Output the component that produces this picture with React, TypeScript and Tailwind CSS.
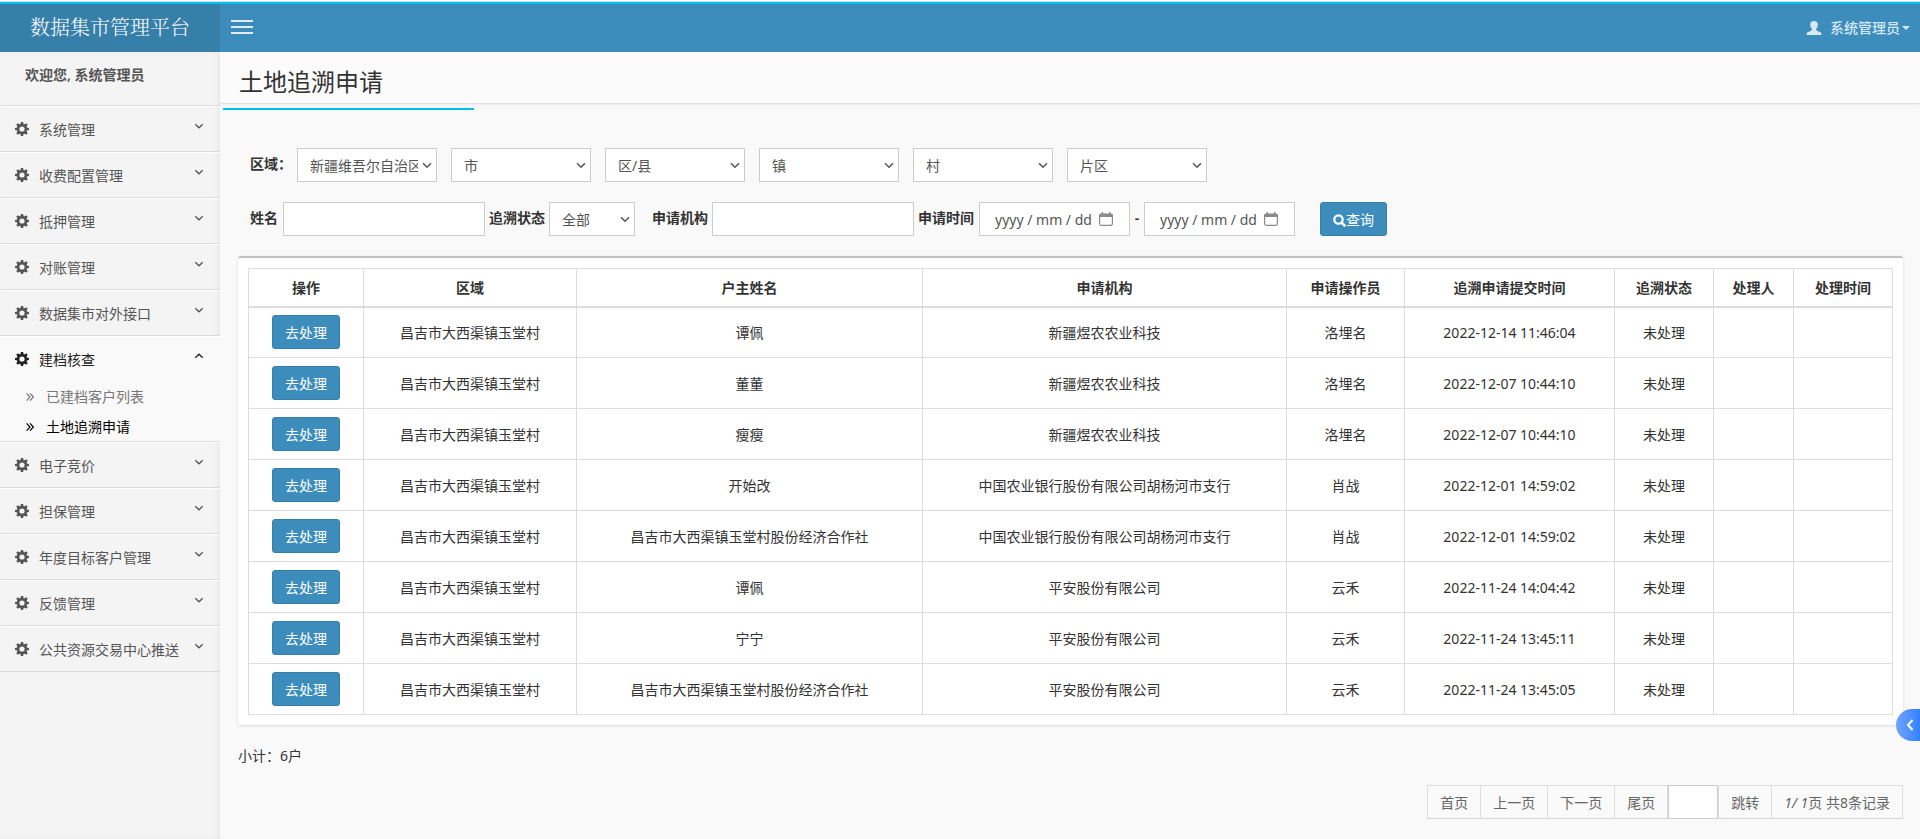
import type { ReactNode } from 'react';

const MENU_TOP = ['系统管理', '收费配置管理', '抵押管理', '对账管理', '数据集市对外接口'];
const MENU_BOTTOM = ['电子竞价', '担保管理', '年度目标客户管理', '反馈管理', '公共资源交易中心推送'];

const REGIONS = [
  { name: '省', value: '新疆维吾尔自治区' },
  { name: '市', value: '市' },
  { name: '区/县', value: '区/县' },
  { name: '镇', value: '镇' },
  { name: '村', value: '村' },
  { name: '片区', value: '片区' },
];

const COLUMNS = [
  { title: '操作', width: 'w-[115px]' },
  { title: '区域', width: 'w-[213px]' },
  { title: '户主姓名', width: 'w-[346px]' },
  { title: '申请机构', width: 'w-[364px]' },
  { title: '申请操作员', width: 'w-[118px]' },
  { title: '追溯申请提交时间', width: 'w-[210px]' },
  { title: '追溯状态', width: 'w-[99px]' },
  { title: '处理人', width: 'w-[80px]' },
  { title: '处理时间', width: 'w-[99px]' },
];

const AREA = '昌吉市大西渠镇玉堂村';

const ROWS = [
  [AREA, '谭佩', '新疆煜农农业科技', '洛埋名', '2022-12-14 11:46:04', '未处理'],
  [AREA, '董董', '新疆煜农农业科技', '洛埋名', '2022-12-07 10:44:10', '未处理'],
  [AREA, '瘦瘦', '新疆煜农农业科技', '洛埋名', '2022-12-07 10:44:10', '未处理'],
  [AREA, '开始改', '中国农业银行股份有限公司胡杨河市支行', '肖战', '2022-12-01 14:59:02', '未处理'],
  [AREA, '昌吉市大西渠镇玉堂村股份经济合作社', '中国农业银行股份有限公司胡杨河市支行', '肖战', '2022-12-01 14:59:02', '未处理'],
  [AREA, '谭佩', '平安股份有限公司', '云禾', '2022-11-24 14:04:42', '未处理'],
  [AREA, '宁宁', '平安股份有限公司', '云禾', '2022-11-24 13:45:11', '未处理'],
  [AREA, '昌吉市大西渠镇玉堂村股份经济合作社', '平安股份有限公司', '云禾', '2022-11-24 13:45:05', '未处理'],
];

const TEETH = [0, 45, 90, 135, 180, 225, 270, 315];

function GearIcon() {
  return (
    <svg className="size-3.5 shrink-0" viewBox="0 0 14 14" fill="currentColor" aria-hidden>
      <circle cx="7" cy="7" r="3.9" fill="none" stroke="currentColor" strokeWidth="2.6" />
      {TEETH.map((a) => (
        <path key={a} d="M5.4 2.6 5.900 0h2.200l.5 2.6z" transform={`rotate(${a} 7 7)`} />
      ))}
    </svg>
  );
}

function AngleIcon({ up = false }: { up?: boolean }) {
  return (
    <svg className="h-2 w-2.5 shrink-0" viewBox="0 0 10 8" fill="none" stroke="currentColor" strokeWidth="1.3" aria-hidden>
      <path d={up ? 'M1.3 5.8 5 2.2l3.7 3.6' : 'M1.3 2.2 5 5.8l3.7-3.6'} />
    </svg>
  );
}

function DoubleAngleIcon() {
  return (
    <svg className="h-2.5 w-2 shrink-0" viewBox="0 0 8 10" fill="none" stroke="currentColor" strokeWidth="1.2" aria-hidden>
      <path d="M.6 1.4 4 5 .6 8.6M4 1.4 7.4 5 4 8.6" />
    </svg>
  );
}

function UserIcon() {
  return (
    <svg className="h-3.5 w-4" viewBox="0 0 16 14" fill="currentColor" aria-hidden>
      <path d="M8 0C5.7 0 4.2 1.3 4.2 3.6c0 1.5.5 3.200 1.500 4.200.3.4.3 1.3-.2 1.600L1.600 11.300C.8 11.700.6 12.200.6 13v1h14.800v-1c0-.8-.2-1.300-1-1.700l-3.900-1.900c-.5-.3-.5-1.200-.2-1.600 1-1 1.500-2.700 1.500-4.200C11.800 1.300 10.300 0 8 0z" />
    </svg>
  );
}

function SearchIcon() {
  return (
    <svg className="size-[13px]" viewBox="0 0 13 13" fill="none" stroke="currentColor" aria-hidden>
      <circle cx="5.5" cy="5.5" r="4.2" strokeWidth="2.2" />
      <path d="m8.800 8.800 2.800 2.800" strokeWidth="2.600" strokeLinecap="round" />
    </svg>
  );
}

function CalendarIcon() {
  return (
    <svg className="size-3.5" viewBox="0 0 14 14" fill="none" aria-hidden>
      <rect x=".6" y="2" width="12.800" height="11.300" rx="1.500" stroke="#8a8a8a" strokeWidth="1.200" />
      <path d="M.6 2h12.800v3H.6zM2.500 0h1.500v2H2.500zM10 0h1.500v2H10z" fill="#8a8a8a" />
    </svg>
  );
}

function MenuItem({ children, open = false }: { children: ReactNode; open?: boolean }) {
  return (
    <a
      href="#"
      className={`flex h-11 items-center pr-4 pl-[15px] ${open ? 'text-[#222]' : 'text-[#555]'}`}
    >
      <GearIcon />
      <span className="ml-2.5 flex-1 pt-0.5">{children}</span>
      <span className="pb-1.5">
        <AngleIcon up={open} />
      </span>
    </a>
  );
}

function Select({ label, value, className }: { label: string; value: string; className: string }) {
  return (
    <div className={`relative h-[34px] ${className}`}>
      <select
        aria-label={label}
        className="h-full w-full appearance-none border border-[#ccc] bg-white pt-0.5 pr-[18px] pl-3 text-[#555]"
      >
        <option>{value}</option>
      </select>
      <svg
        className="pointer-events-none absolute top-3 right-[5px] h-2.5 w-2.5 text-[#555]"
        viewBox="0 0 10 10"
        fill="none"
        stroke="currentColor"
        strokeWidth="1.5"
        aria-hidden
      >
        <path d="M1 3.200 5 7.200l4-4" />
      </svg>
    </div>
  );
}

function DateBox({ label }: { label: string }) {
  return (
    <div className="flex h-[34px] w-[151px] items-center border border-[#ccc] bg-white pr-4 pl-[15px] text-[#555]">
      <input aria-label={label} placeholder="yyyy / mm / dd" className="w-0 flex-1 pt-0.5 outline-none placeholder:text-[#555]" />
      <CalendarIcon />
    </div>
  );
}

const PAGER = 'h-[34px] border border-[#ddd] border-b-[#d5d5d5] bg-[#fafafa] px-3 pt-0.5 text-[#666]';

export default function App() {
  return (
    <div className="flex min-h-screen flex-col bg-[#f9f9f9] font-['Noto_Sans','Noto_Sans_CJK_SC',sans-serif] text-sm leading-5 text-[#333]">
      <div className="h-0.5 border-b border-[#ddd] bg-white" />
      <header className="flex h-[50px] border-t-2 border-[#00c0ef] bg-[#3c8dbc] text-white">
        <a href="#" className="flex w-[220px] items-center justify-center bg-[#367fa9] pb-0.5 font-['Noto_Serif_CJK_SC','Noto_Sans_CJK_SC',serif] text-xl font-light">
          数据集市管理平台
        </a>
        <button aria-label="切换菜单" className="ml-[11px] flex w-[22px] flex-col justify-center gap-1 pb-0.5">
          <span className="h-0.5 bg-[#e2eef5]" />
          <span className="h-0.5 bg-[#e2eef5]" />
          <span className="h-0.5 bg-[#e2eef5]" />
        </button>
        <button className="mr-2.5 ml-auto flex items-center text-[#d8e8f2]">
          <UserIcon />
          <span className="ml-2 font-medium">系统管理员</span>
          <svg className="ml-0.5 h-1 w-2" viewBox="0 0 8 4" fill="currentColor" aria-hidden>
            <path d="M0 0h8L4 4z" />
          </svg>
        </button>
      </header>

      <div className="flex flex-1">
        <aside className="w-[220px] shrink-0 bg-[#f4f4f4] shadow-[inset_-3px_0_8px_-4px_rgba(0,0,0,0.1)]">
          <div className="h-[54px] border-b border-[#dbdbdb] pt-[13px] pl-[25px] font-semibold text-[#555]">欢迎您, 系统管理员</div>
          <nav>
            <ul>
              {MENU_TOP.map((item) => (
                <li key={item} className="border-t border-b border-t-white border-b-[#dbdbdb]">
                  <MenuItem>{item}</MenuItem>
                </li>
              ))}
              <li className="border-t border-b border-t-white border-b-[#dbdbdb] bg-[#f9f9f9]">
                <MenuItem open>建档核查</MenuItem>
                <ul className="pt-px">
                  <li>
                    <a href="#" className="flex h-[30px] items-center gap-3 pl-[26px] text-[#777]">
                      <DoubleAngleIcon />
                      已建档客户列表
                    </a>
                  </li>
                  <li>
                    <a href="#" className="flex h-[29px] items-center gap-3 pl-[26px] text-black">
                      <DoubleAngleIcon />
                      土地追溯申请
                    </a>
                  </li>
                </ul>
              </li>
              {MENU_BOTTOM.map((item) => (
                <li key={item} className="border-t border-b border-t-white border-b-[#dbdbdb]">
                  <MenuItem>{item}</MenuItem>
                </li>
              ))}
            </ul>
          </nav>
        </aside>

        <main className="min-w-0 flex-1">
          <div className="h-[52px] border-b border-[#e4e4e4] bg-[#fbfbfb] pt-3 pl-[19px] shadow-[0_1px_2px_rgba(0,0,0,0.06)]">
            <h1 className="text-2xl leading-9">土地追溯申请</h1>
          </div>
          <div className="mt-1 ml-[3px] h-0.5 w-[251px] bg-[#00c0ef]" />

          <form className="mt-[38px] pl-[30px]">
            <div className="flex gap-3.5">
              <span className="w-[33px] pt-1.5 font-semibold whitespace-nowrap">区域：</span>
              {REGIONS.map((region) => (
                <Select key={region.name} label={region.name} value={region.value} className="w-[140px]" />
              ))}
            </div>
            <div className="mt-5 flex">
              <label htmlFor="owner" className="mr-[5px] pt-1.5 font-semibold">姓名</label>
              <input id="owner" className="h-[34px] w-[202px] border border-[#ccc] bg-white px-3" />
              <span className="mx-1 pt-1.5 font-semibold">追溯状态</span>
              <Select label="追溯状态" value="全部" className="w-[86px]" />
              <label htmlFor="org" className="mr-1 ml-[17px] pt-1.5 font-semibold">申请机构</label>
              <input id="org" className="h-[34px] w-[202px] border border-[#ccc] bg-white px-3" />
              <span className="mr-[5px] ml-1 pt-1.5 font-semibold">申请时间</span>
              <DateBox label="开始时间" />
              <span className="w-3.5 pt-1.5 text-center font-semibold">-</span>
              <DateBox label="结束时间" />
              <button
                type="button"
                className="ml-[25px] flex h-[34px] items-center rounded-[3px] border border-[#367fa9] bg-[#3c8dbc] px-3 pt-0.5 text-white"
              >
                <SearchIcon />
                查询
              </button>
            </div>
          </form>

          <div className="mt-5 mr-[17px] ml-[18px] rounded-[3px] border-t-2 border-[#c1c1c1] bg-white p-2.5 shadow-[0_1px_3px_rgba(0,0,0,0.12)]">
            <table className="w-full table-fixed border-collapse text-center">
              <thead>
                <tr className="h-[38px]">
                  {COLUMNS.map((col) => (
                    <th key={col.title} className={`border border-b-2 border-[#ddd] pt-0.5 font-semibold ${col.width}`}>
                      {col.title}
                    </th>
                  ))}
                </tr>
              </thead>
              <tbody>
                {ROWS.map((row, i) => (
                  <tr key={i} className="h-[51px]">
                    <td className="border border-[#ddd]">
                      <button className="h-[34px] rounded-[3px] border border-[#367fa9] bg-[#3c8dbc] px-3 pt-0.5 align-middle text-white">
                        去处理
                      </button>
                    </td>
                    {row.map((cell, j) => (
                      <td key={j} className="border border-[#ddd] pt-0.5">{cell}</td>
                    ))}
                    <td className="border border-[#ddd]" />
                    <td className="border border-[#ddd]" />
                  </tr>
                ))}
              </tbody>
            </table>
          </div>

          <p className="mt-[21px] ml-[18px]">小计：6户</p>

          <div className="mt-[19px] mr-[17px] flex justify-end">
            <button className={PAGER}>首页</button>
            <button className={`-ml-px ${PAGER}`}>上一页</button>
            <button className={`-ml-px ${PAGER}`}>下一页</button>
            <button className={`-ml-px ${PAGER}`}>尾页</button>
            <input aria-label="页码" className="h-[34px] w-[50px] border border-[#ccc] bg-white px-2" />
            <button className={`rounded-[3px] ${PAGER}`}>跳转</button>
            <span className="-ml-px h-[34px] border border-[#ddd] border-b-[#d5d5d5] bg-[#fafafa] px-3 pt-[7px] text-[#666]">
              <em>1/ 1</em>页 共8条记录
            </span>
          </div>
        </main>
      </div>

      <button
        aria-label="展开侧栏"
        className="fixed top-[709px] right-0 flex h-8 w-6 items-center justify-center rounded-l-full bg-linear-to-r from-[#6ea6ff] to-[#3380ff] pl-1 text-white"
      >
        <svg className="h-3 w-2" viewBox="0 0 8 12" fill="none" stroke="currentColor" strokeWidth="2" aria-hidden>
          <path d="M6.500 1 2 6l4.500 5" />
        </svg>
      </button>
    </div>
  );
}
